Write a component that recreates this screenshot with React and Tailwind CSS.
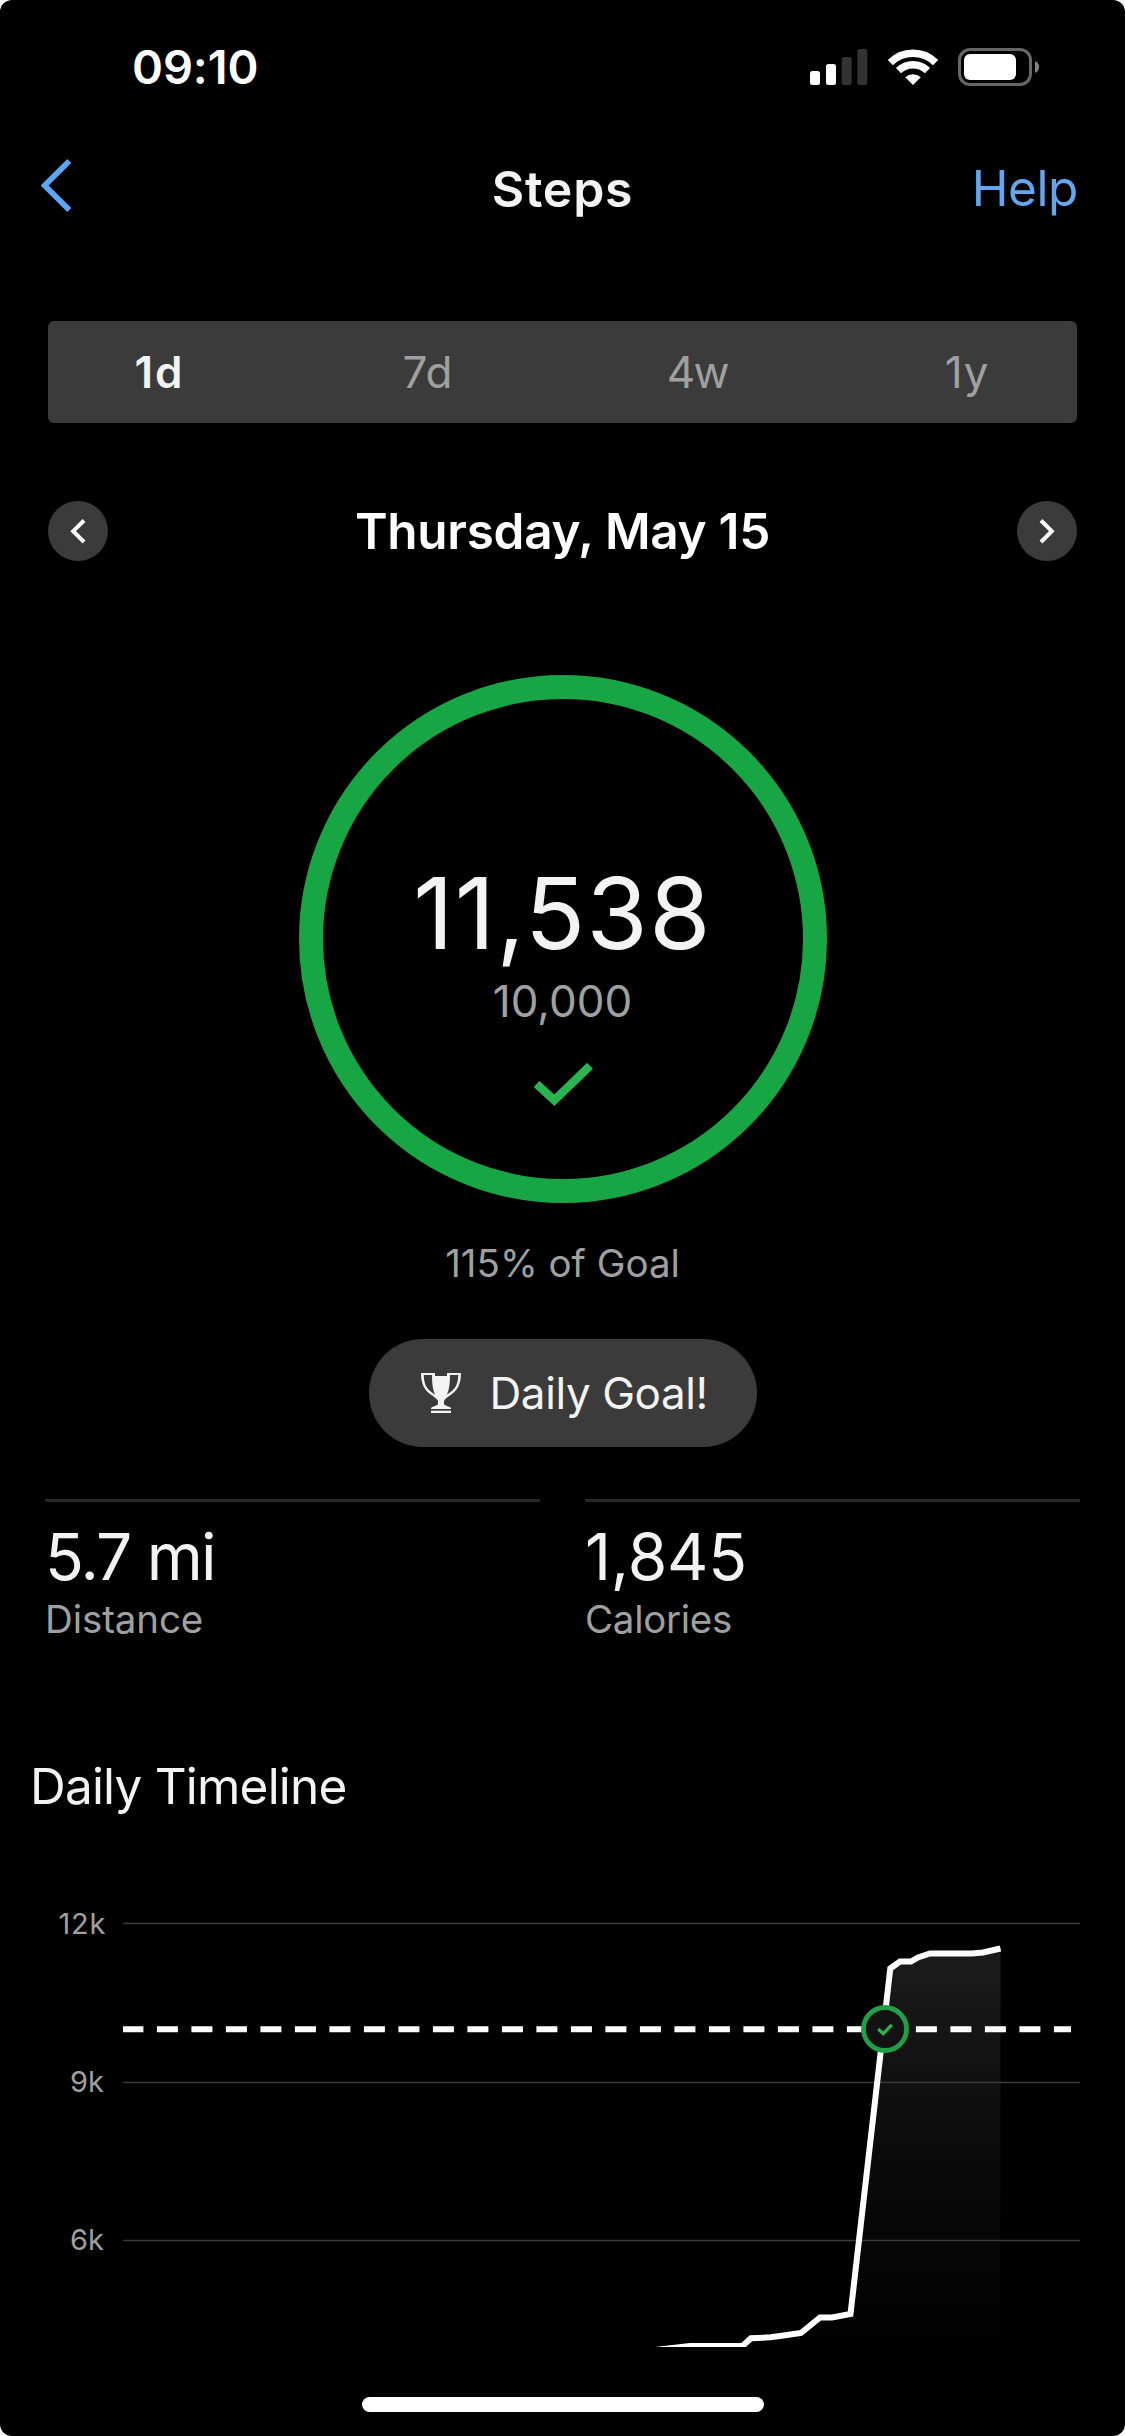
import React, { useState } from 'react';

const ranges = ['1d', '7d', '4w', '1y'];

const rangeTracking = {
    '1d': 'pl-[3px] tracking-[2px]',
    '7d': 'tracking-[0.3px]',
    '4w': 'tracking-[-1.6px]',
    '1y': 'tracking-[0.9px]',
};

const stats = [
    { label: 'Distance', value: '5.7 mi', tracking: 'tracking-[-1.8px]', labelTracking: 'tracking-[-0.1px]' },
    { label: 'Calories', value: '1,845', tracking: 'tracking-[-0.2px]', labelTracking: 'tracking-[-0.3px]' },
];

const yLabels = ['12k', '9k', '6k'];
const gridLines = [107.5, 266.5, 424.5];
const goalY = 213.2;

// cumulative steps over the day, in chart pixels
const points = [
    [532, 534], [567, 530], [619.5, 530], [628, 522.3], [647.5, 521.3],
    [657, 520], [678, 517], [697, 501.5], [709, 501.5], [727.5, 498],
    [767.3, 152.5], [777, 145.5], [788, 145.5], [795, 141.5], [807, 137.5],
    [849, 137.5], [860, 136.5], [877.5, 132.5],
];

const linePoints = points.map((p) => p.join(',')).join(' ');

const SignalIcon = () => (
    <svg width="58" height="36" viewBox="0 0 58 36">
        <rect x="0" y="22" width="10" height="14" rx="2.5" fill="#fff" />
        <rect x="16" y="15" width="10" height="21" rx="2.5" fill="#fff" />
        <rect x="31.7" y="8" width="10" height="28" rx="2.5" fill="#333" />
        <rect x="47.3" y="0" width="10" height="36" rx="2.5" fill="#333" />
    </svg>
);

const WifiIcon = () => (
    <svg width="52" height="38" viewBox="0 0 52 38" fill="none" stroke="#fff">
        <path d="M3.4 14.6A32 32 0 0 1 48.6 14.6" strokeWidth="7.6" />
        <path d="M11.5 22.7A20.5 20.5 0 0 1 40.5 22.7" strokeWidth="7.4" />
        <path d="M26 37L18.2 29.2A11.6 11.6 0 0 1 33.8 29.2Z" fill="#fff" stroke="none" />
    </svg>
);

const BatteryIcon = () => (
    <svg width="82" height="38" viewBox="0 0 82 38">
        <rect x="1.5" y="1.5" width="71" height="35" rx="10.5" fill="none" stroke="#666" strokeWidth="3" />
        <rect x="6" y="6" width="52" height="26" rx="6" fill="#fff" />
        <path d="M77 13C82.5 15 82.5 23 77 25Z" fill="#808080" />
    </svg>
);

const Trophy = () => (
    <svg width="40" height="40" viewBox="0 0 40 40" fill="#f3f3f3">
        <path
            fillRule="evenodd"
            d="M0 0H14V3H26V0H40C40 12 36 17 31 21C26 24.5 24 26 23 28V31C24 33 29 33.5 30 35V36H10V35C11 33.5 16 33 17 31V28C16 26 14 24.5 9 21C4 17 0 12 0 0ZM2.8 2H11C11 10 11.5 16 14 21.5C9 18 2.8 15 2.8 2ZM37.2 2H29C29 10 28.5 16 26 21.5C31 18 37.2 15 37.2 2Z"
        />
        <rect x="10" y="37.7" width="20" height="2.3" />
    </svg>
);

const RoundButton = ({ label, d }) => (
    <button aria-label={label} className="flex size-[60px] items-center justify-center rounded-full bg-[#3b3b3b]">
        <svg width="60" height="60" viewBox="0 0 60 60" fill="none" stroke="#fff" strokeWidth="4">
            <path d={d} />
        </svg>
    </button>
);

const Timeline = () => (
    <div className="flex">
        <div className="flex w-[123px] flex-col gap-[118px] pt-[88px] pr-[19px] text-right text-[29px] leading-10 text-[#a0a0a0]">
            {yLabels.map((l) => (
                <span key={l} className={l === '12k' ? '-mr-[2px] tracking-[0.7px]' : ''}>{l}</span>
            ))}
        </div>
        <svg width="957" height="531" viewBox="0 0 957 531" fill="none">
            <defs>
                <linearGradient id="area" x1="0" y1="132" x2="0" y2="531" gradientUnits="userSpaceOnUse">
                    <stop offset="0" stopColor="#1c1c1c" />
                    <stop offset="0.5" stopColor="#0b0b0b" />
                    <stop offset="1" stopColor="#010101" />
                </linearGradient>
            </defs>
            <polygon points={`532,540 ${linePoints} 877.5,540`} fill="url(#area)" />
            {gridLines.map((y) => (
                <line key={y} x1="0" x2="957" y1={y} y2={y} stroke="#3b3b3b" strokeWidth="1.4" />
            ))}
            <line x1="0" x2="948" y1={goalY} y2={goalY} stroke="#fff" strokeWidth="6" strokeDasharray="21 13.5" strokeDashoffset="0.6" />
            <polyline points={linePoints} stroke="#fff" strokeWidth="6" />
            <circle cx="762" cy="213" r="21.5" fill="#121212" stroke="#229e48" strokeWidth="4.8" />
            <polyline points="755.2,213 760.2,217.7 768.7,208.8" stroke="#2bb550" strokeWidth="3.2" />
        </svg>
    </div>
);

export default function App() {
    const [range, setRange] = useState('1d');

    return (
        <div className="h-[2436px] w-[1125px] bg-white">
            <div className="flex h-full flex-col overflow-hidden rounded-[12px] bg-black font-['Inter',sans-serif] text-[#f3f3f3]">
                <div className="flex h-[134px] items-center justify-between pr-[85px] pl-[132px]">
                    <span className="pb-px text-[47px] leading-none font-semibold tracking-[-0.1px] text-white">09:10</span>
                    <div className="flex items-center gap-[19px]">
                        <SignalIcon />
                        <WifiIcon />
                        <BatteryIcon />
                    </div>
                </div>

                <header className="grid h-[110px] grid-cols-3 items-center px-[47px]">
                    <button aria-label="Back" className="mb-2 -ml-[7px]">
                        <svg width="32" height="53" viewBox="0 0 32 53" fill="none" stroke="#5aa7f5" strokeWidth="5.6">
                            <path d="M29.3 2L4.6 26.5L29.3 51" />
                        </svg>
                    </button>
                    <h1 className="text-center text-[50px] leading-none font-semibold tracking-[0.7px]">Steps</h1>
                    <a className="text-right text-[49.5px] leading-none tracking-[-0.4px] text-[#62a6ee]">Help</a>
                </header>

                <div className="mx-[48px] mt-[77px] flex h-[102px] items-center justify-between rounded-[6px] bg-[#3b3b3b]">
                    {ranges.map((r) => (
                        <button
                            key={r}
                            onClick={() => setRange(r)}
                            className={`w-[220px] text-[44px] leading-none ${rangeTracking[r]} ${
                                r === range ? 'font-semibold text-[#f3f3f3]' : 'text-[#a0a0a0]'
                            }`}
                        >
                            {r}
                        </button>
                    ))}
                </div>

                <div className="mx-[48px] mt-[78px] flex h-[60px] items-center justify-between">
                    <RoundButton label="Previous day" d="M36 19.5L25.2 30.2L36 41" />
                    <h2 className="pt-[2px] text-[49.5px] leading-none font-semibold tracking-[-0.3px] text-white">Thursday, May 15</h2>
                    <RoundButton label="Next day" d="M24 19.5L34.8 30.2L24 41" />
                </div>

                <div className="mt-[114px] flex size-[528px] flex-col items-center self-center rounded-full border-[24px] border-[#17a643] pt-[164px]">
                    <p className="text-[99px] leading-[100px] tracking-[1.4px]">11,538</p>
                    <p className="mt-[10px] text-[44px] leading-[56px] text-[#a0a0a0]">10,000</p>
                    <svg className="mt-[34px] ml-px" width="59" height="43" viewBox="0 0 59 43" fill="none" stroke="#2bb550" strokeWidth="8.4">
                        <path d="M2.6 21L20.3 37.2L56 2.8" />
                    </svg>
                </div>

                <p className="mt-[35px] text-center text-[38.5px] leading-[50px] text-[#a0a0a0]">115% of Goal</p>

                <div className="mt-[51px] flex h-[108px] w-[388px] items-center gap-[29px] self-center rounded-full bg-[#3b3b3b] pl-[52px]">
                    <Trophy />
                    <span className="text-[44px] leading-none tracking-[-0.4px]">Daily Goal!</span>
                </div>

                <div className="mx-[45px] mt-[52px] grid grid-cols-2 gap-[45px]">
                    {stats.map((s) => (
                        <div key={s.label} className="border-t-[3px] border-[#272727] pt-[18px]">
                            <p className={`text-[64px] leading-[73px] ${s.tracking}`}>{s.value}</p>
                            <p className={`mt-[5px] text-[38.5px] leading-[43px] text-[#a0a0a0] ${s.labelTracking}`}>{s.label}</p>
                        </div>
                    ))}
                </div>

                <h3 className="mt-[115px] pl-[30px] text-[49.5px] leading-[60px] tracking-[-0.8px]">Daily Timeline</h3>

                <Timeline />

                <div className="mt-[50px] h-[15px] w-[402px] self-center rounded-full bg-white" />
            </div>
        </div>
    );
}
